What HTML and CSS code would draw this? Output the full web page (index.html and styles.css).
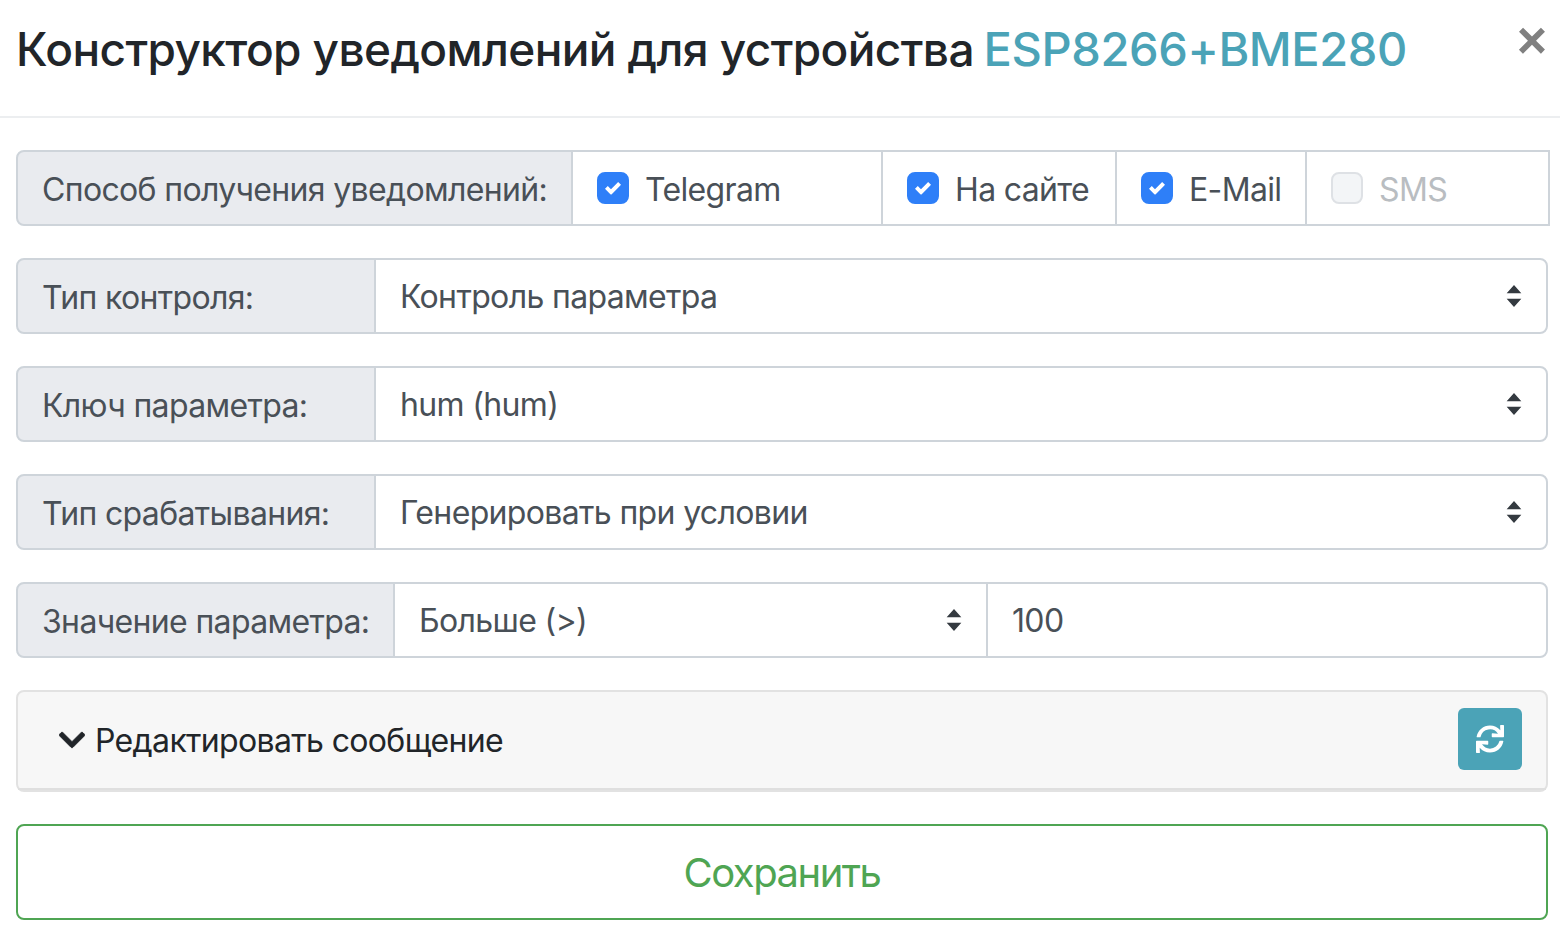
FILE: index.html
```html
<!DOCTYPE html>
<html lang="ru">
<head>
  <meta charset="UTF-8" />
  <title>Конструктор уведомлений</title>
  <link rel="stylesheet" href="styles.css">
</head>
<body>
  <header class="modal-header">
    <h1>Конструктор уведомлений для устройства <span class="device">ESP8266+BME280</span></h1>
    <button class="close" type="button">×</button>
  </header>
  <main class="modal-body">
    <!-- delivery methods -->
    <div class="group group-wide">
      <span class="group-label label-delivery">Способ получения уведомлений:</span>
      <label class="check check-telegram"><input type="checkbox" checked> Telegram</label>
      <label class="check check-site"><input type="checkbox" checked> На сайте</label>
      <label class="check check-mail"><input type="checkbox" checked> E-Mail</label>
      <label class="check check-sms disabled"><input type="checkbox" disabled> SMS</label>
    </div>

    <div class="group">
      <span class="group-label">Тип контроля:</span>
      <select class="field"><option>Контроль параметра</option></select>
    </div>

    <div class="group">
      <span class="group-label">Ключ параметра:</span>
      <select class="field"><option>hum (hum)</option></select>
    </div>

    <div class="group">
      <span class="group-label">Тип срабатывания:</span>
      <select class="field"><option>Генерировать при условии</option></select>
    </div>

    <div class="group">
      <span class="group-label label-value">Значение параметра:</span>
      <select class="field field-op"><option>Больше (&gt;)</option></select>
      <input class="field field-num" type="text" value="100">
    </div>

    <!-- message editor, collapsed -->
    <div class="card">
      <div class="card-header">
        <svg class="chevron" viewBox="0 0 448 512"><path d="M207.029 381.476L12.686 187.132c-9.373-9.373-9.373-24.569 0-33.941l22.667-22.667c9.357-9.357 24.522-9.375 33.901-.04L224 284.505l154.745-154.021c9.379-9.335 24.544-9.317 33.901.04l22.667 22.667c9.373 9.373 9.373 24.569 0 33.941L240.971 381.476c-9.373 9.372-24.569 9.372-33.942 0z"/></svg>
        <span class="card-title">Редактировать сообщение</span>
        <button class="refresh" type="button">
          <svg viewBox="0 0 512 512"><path d="M440.65 12.57l4 82.77A247.16 247.16 0 0 0 255.83 8C134.73 8 33.91 94.92 12.29 209.82A12 12 0 0 0 24.09 224h49.05a12 12 0 0 0 11.67-9.26 175.91 175.91 0 0 1 317-56.94l-101.46-4.86a12 12 0 0 0-12.57 12v47.41a12 12 0 0 0 12 12H500a12 12 0 0 0 12-12V12a12 12 0 0 0-12-12h-47.37a12 12 0 0 0-11.98 12.57zM255.83 432a175.61 175.61 0 0 1-146-77.8l101.8 4.87a12 12 0 0 0 12.57-12v-47.4a12 12 0 0 0-12-12H12a12 12 0 0 0-12 12V500a12 12 0 0 0 12 12h47.35a12 12 0 0 0 12-12.6l-4.15-82.57A247.17 247.17 0 0 0 255.83 504c121.11 0 221.93-86.92 243.55-201.82a12 12 0 0 0-11.8-14.18h-49.05a12 12 0 0 0-11.67 9.26A175.86 175.86 0 0 1 255.83 432z"/></svg>
        </button>
      </div>
    </div>

    <button class="save" type="button">Сохранить</button>
  </main>
</body>
</html>
```

FILE: styles.css
```css
* {
  box-sizing: border-box;
}
html, body {
  height: 100%;
}
body {
  margin: 0;
  background: #fff;
  color: #212529;
  font-family: Inter, "Noto Sans", sans-serif;
  font-size: 32px;
  overflow: hidden;
}
.modal-header {
  display: flex;
  justify-content: space-between;
  height: 118px;
  padding: 16px 12px 0 16px;
  border-bottom: 2px solid #eceef0;
}
.modal-header h1 {
  margin: 0;
  font-size: 46px;
  font-weight: 500;
  line-height: 66px;
  letter-spacing: -0.6px;
  white-space: nowrap;
}
.device {
  margin-left: -2px;
  color: #4ba3b7;
  font-size: 47px;
  letter-spacing: -0.4px;
}
.close {
  width: 32px;
  height: 48px;
  padding: 0;
  border: 0;
  background: none;
  color: #808080;
  font-family: "Liberation Sans", sans-serif;
  font-size: 52px;
  font-weight: 700;
  line-height: 48px;
}
.modal-body {
  display: flex;
  flex-direction: column;
  gap: 32px;
  padding: 32px 12px 0 16px;
}
.group {
  display: flex;
  height: 76px;
  color: #495057;
  letter-spacing: -0.65px;
}
.group-wide {
  width: 1534px;
}
.group-label {
  flex: none;
  display: flex;
  align-items: center;
  width: 360px;
  padding: 2px 24px 0;
  background: #e9ebef;
  border: 2px solid #ced4da;
  border-radius: 8px 0 0 8px;
  white-space: nowrap;
}
.label-delivery {
  width: 557px;
}
.label-value {
  width: 379px;
}
.check {
  display: flex;
  align-items: center;
  gap: 16px;
  margin-left: -2px;
  padding: 2px 24px 0;
  border: 2px solid #ced4da;
  white-space: nowrap;
}
.check-telegram {
  width: 312px;
}
.check-site {
  width: 236px;
}
.check-mail {
  width: 192px;
}
.check-sms {
  flex: 1;
}
.check.disabled {
  color: #b9bdc1;
}
.check input {
  appearance: none;
  flex: none;
  width: 32px;
  height: 32px;
  margin: -2px 0 0;
  background: #f3f5f7;
  border: 2px solid #dee1e5;
  border-radius: 8px;
}
.check input:checked {
  background: #2e7ff8 url("data:image/svg+xml,%3Csvg xmlns='http://www.w3.org/2000/svg' viewBox='0 0 8 8'%3E%3Cpath fill='%23fff' d='M6.56 1l-.7.73L3 4.6l-.9-.9-.7-.73L0 4.4l.72.7 1.6 1.6.7.73.72-.73 3.56-3.57.7-.7L6.56 1z'/%3E%3C/svg%3E") center / 16px 16px no-repeat;
  border-color: #2e7ff8;
}
.field {
  flex: 1;
  min-width: 0;
  height: 76px;
  margin-left: -2px;
  padding: 1px 24px 0;
  background: #fff;
  border: 2px solid #ced4da;
  border-radius: 0 8px 8px 0;
  color: #495057;
  font: inherit;
  letter-spacing: inherit;
  outline: none;
}
select.field {
  appearance: none;
  background: #fff url("data:image/svg+xml,%3Csvg xmlns='http://www.w3.org/2000/svg' viewBox='0 0 16 24'%3E%3Cpath fill='%23343a40' d='M8 0l8 9H0zM8 24l8-9H0z'/%3E%3C/svg%3E") right 24px center / 16px 22px no-repeat;
}
.field-op {
  flex: none;
  width: 595px;
  border-radius: 0;
}
.card {
  height: 102px;
  background: #f7f7f7;
  border: 2px solid #e2e2e2;
  border-radius: 8px;
}
.card-header {
  display: flex;
  align-items: center;
  height: 98px;
  padding: 0 24px 2px 41px;
  border-bottom: 2px solid #dfdfdf;
}
.chevron {
  width: 26px;
  height: 30px;
  margin: 2px 10px 0 0;
  stroke: #212529;
  stroke-width: 16;
  fill: #212529;
}
.card-title {
  flex: 1;
  padding-top: 3px;
  letter-spacing: -0.65px;
}
.refresh {
  display: flex;
  align-items: center;
  justify-content: center;
  width: 64px;
  height: 62px;
  padding: 0;
  background: #4ba3b7;
  border: 0;
  border-radius: 6px;
}
.refresh svg {
  width: 28px;
  height: 28px;
  fill: #fff;
}
.save {
  height: 96px;
  background: #fff;
  border: 2px solid #4fa553;
  border-radius: 8px;
  color: #4fa553;
  font: inherit;
  font-size: 40px;
  letter-spacing: -1.5px;
}
```
